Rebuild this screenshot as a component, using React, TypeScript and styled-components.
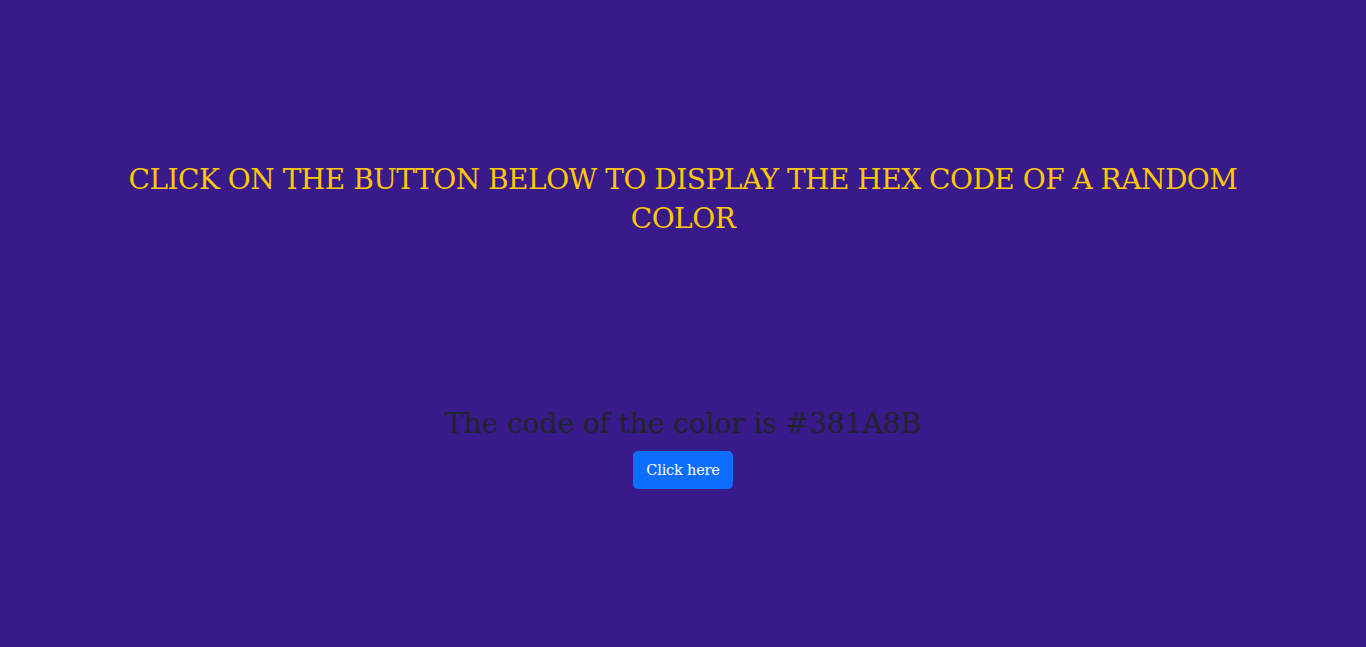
import styled, { createGlobalStyle } from 'styled-components';

const Global = createGlobalStyle`
  html, body {
    margin: 0;
    background: #381a8b;
  }
  body {
    font-family: "DejaVu Serif", "Liberation Serif", serif;
  }
`;

const Page = styled.div`
  min-height: 647px;
  display: flex;
  flex-direction: column;
  align-items: center;
  padding-top: 161px;
  box-sizing: border-box;
`;

const Title = styled.h2`
  margin: 0;
  max-width: 1140px;
  text-align: center;
  color: #ffc800;
  font-size: 28px;
  font-weight: 400;
  line-height: 38.5px;
  letter-spacing: -0.5px;
`;

const Result = styled.div`
  margin-top: 167px;
  display: flex;
  flex-direction: column;
  align-items: center;
  gap: 9px;
`;

const Code = styled.p`
  margin: 0;
  color: #212529;
  font-size: 28.5px;
  line-height: 37px;
  letter-spacing: -0.3px;
`;

const Button = styled.button`
  height: 38px;
  width: 100px;
  border: none;
  border-radius: 5px;
  background: #0d6efd;
  color: #fff;
  font-family: inherit;
  font-size: 14.5px;
  font-weight: 400;
  letter-spacing: -0.2px;
  cursor: pointer;
`;

export default function App() {
  return (
    <>
      <Global />
      <Page>
        <Title>CLICK ON THE BUTTON BELOW TO DISPLAY THE HEX CODE OF A RANDOM COLOR</Title>
        <Result>
          <Code>The code of the color is #381A8B</Code>
          <Button>Click here</Button>
        </Result>
      </Page>
    </>
  );
}
